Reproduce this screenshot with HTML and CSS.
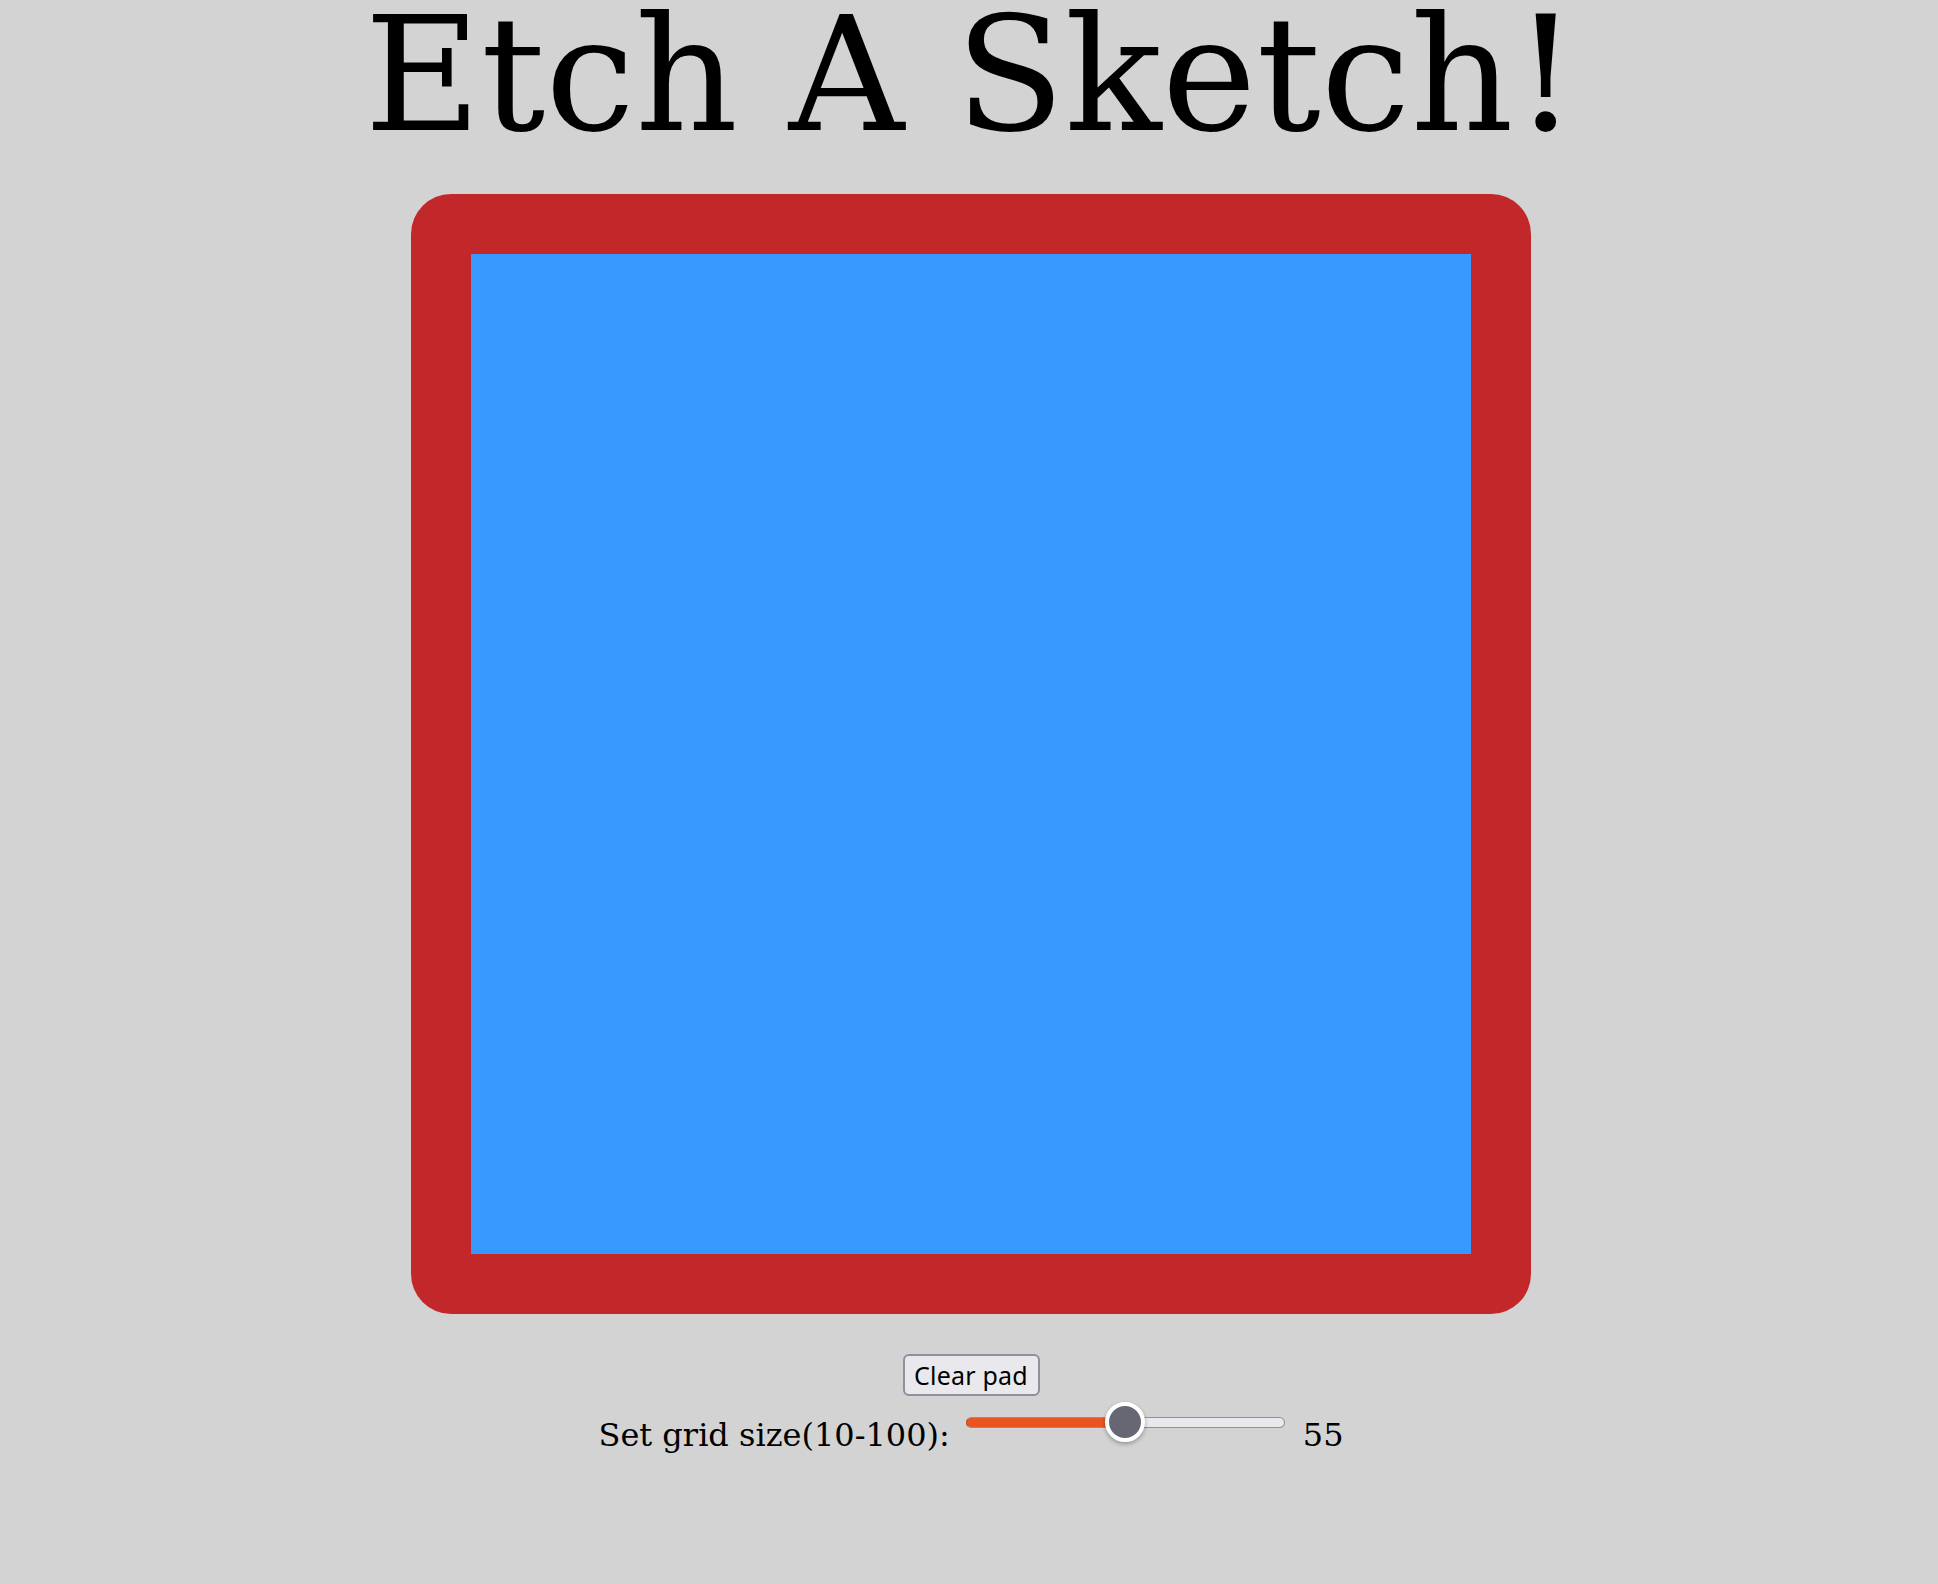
FILE: index.html
```html
<!DOCTYPE html>
<html lang="en">
<head>
<meta charset="utf-8">
<title>Etch A Sketch</title>
<link rel="stylesheet" href="styles.css">
</head>
<body>
<main class="page">
  <h1 class="title">Etch A Sketch!</h1>
  <div class="pad"></div>
  <div class="controls">
    <button class="clear-btn" type="button">Clear pad</button>
    <div class="size-row">
      <label class="size-label" for="size">Set grid size(10-100):</label>
      <input class="size-range" id="size" type="range" min="10" max="100" value="55">
      <span class="size-value">55</span>
    </div>
  </div>
</main>
</body>
</html>
```
FILE: styles.css
```css
html, body {
  margin: 0;
  padding: 0;
  background: #d3d3d3;
}
body {
  font-family: "DejaVu Serif", serif;
  color: #000;
}
.page {
  display: flex;
  flex-direction: column;
  align-items: center;
  padding-left: 4px;
}
.title {
  margin: 0;
  font-family: "DejaVu Serif", serif;
  font-weight: normal;
  font-size: 160px;
  line-height: 150px;
  height: 150px;
}
.pad {
  margin-top: 44px;
  width: 1000px;
  height: 1000px;
  border: 60px solid #c2282a;
  border-radius: 40px;
  background: #3799fe;
}
.controls {
  margin-top: 40px;
  display: flex;
  flex-direction: column;
  align-items: center;
}
.clear-btn {
  box-sizing: border-box;
  width: 137px;
  height: 42px;
  padding: 0;
  font-family: "Noto Sans", sans-serif;
  font-size: 25px;
  letter-spacing: 0.2px;
  color: #000;
  background: #e9e9ed;
  border: 2px solid #8f8f9d;
  border-radius: 6px;
}
.size-row {
  display: flex;
  align-items: flex-start;
  padding-bottom: 20px;
}
.size-label,
.size-value {
  font-size: 32px;
  line-height: 37px;
  padding-top: 21px;
}
.size-range {
  -webkit-appearance: none;
  appearance: none;
  width: 319px;
  height: 40px;
  margin: 6px 18px 0 16px;
  background: transparent;
}
.size-range::-webkit-slider-runnable-track {
  box-sizing: border-box;
  height: 11px;
  border-radius: 6px;
  background: linear-gradient(to right, #e95420 0, #e95420 50%, #e9e9ed 50%, #e9e9ed 100%);
  border: 1px solid #8f8f9d;
  border-left-color: #c7430f;
}
.size-range::-webkit-slider-thumb {
  -webkit-appearance: none;
  appearance: none;
  box-sizing: border-box;
  width: 40px;
  height: 40px;
  margin-top: -15.5px;
  border-radius: 50%;
  background: #676774;
  border: 4px solid #fff;
  box-shadow: 0 2px 4px rgba(0,0,0,0.3);
}
```
